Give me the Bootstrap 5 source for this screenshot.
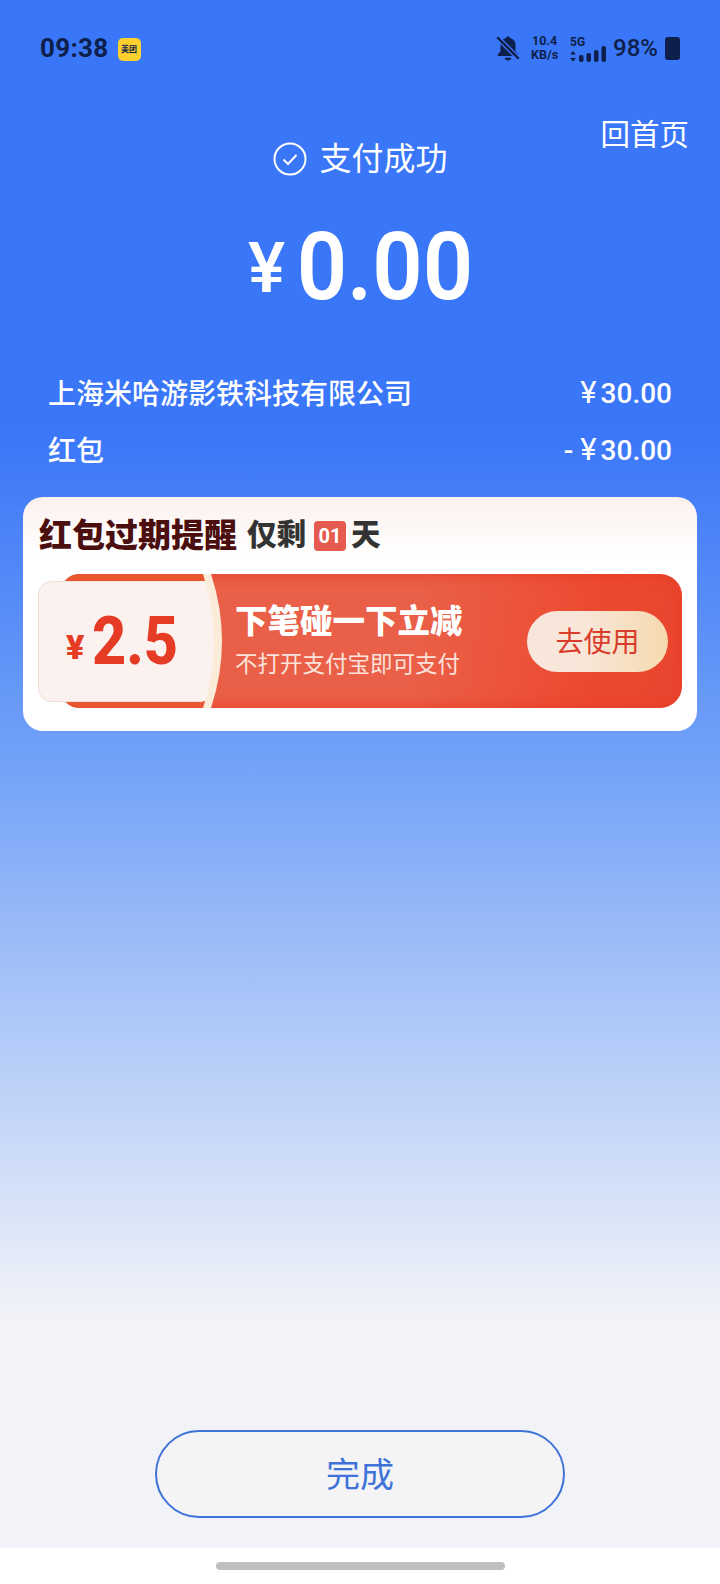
<!DOCTYPE html>
<html lang="zh-CN">
<head>
  <meta charset="UTF-8">
  <title>支付成功</title>
  <link href="https://cdn.jsdelivr.net/npm/bootstrap@5.3.0/dist/css/bootstrap.min.css" rel="stylesheet">
  <style>
    body {
      width: 720px;
      height: 1584px;
      overflow: hidden;
      background: #fff;
      font-family: Roboto, "Noto Sans CJK SC", sans-serif;
      color: #fff;
    }
    .pay-screen {
      height: 1548px;
      background: linear-gradient(180deg, #3a76f8 0, #3a76f8 430px, #6f9ff8 745px, #f1f3f8 1315px, #f1f3f8 100%);
    }
    .status-row {
      height: 96px;
      padding: 0 40px;
      color: #0d1f4a;
    }
    .clock { font-size: 26px; font-weight: 700; letter-spacing: .3px; line-height: 1; }
    .app-chip {
      width: 23px; height: 23px; margin-left: 9px; margin-top: 2px;
      background: #fdd02f; border-radius: 5px;
      font-size: 8px; font-weight: 700; line-height: 23px; text-align: center;
    }
    .speed { font-size: 12.5px; font-weight: 700; line-height: 14px; text-align: center; margin: 0 12px 0 9px; }
    .net-5g { font-size: 12px; font-weight: 700; line-height: 1; margin-top: 1px; margin-bottom: -2px; }
    .battery-pct { font-size: 24px; font-weight: 500; line-height: 1; margin: 0 7px 0 5px; }
    .battery-box { width: 15px; height: 23px; background: #0d1f4a; border-radius: 3px; }
    .home-link { font-size: 29.5px; line-height: 30px; margin: 24px 31px 0 0; }
    .result-line { font-size: 32px; line-height: 46px; gap: 12px; margin-top: -14px; margin-left: 1px; }
    .amount-line { height: 96px; margin-top: 36px; padding-left: 8px; line-height: 1; }
    .amount-yen { font-size: 70px; font-weight: 500; margin-right: 5px; margin-top: 4px; }
    .amount-num { font-size: 95px; font-weight: 600; display: inline-block; transform: scale(.93, 1); }
    .bill-rows { padding: 0 48px; margin-top: 52px; font-size: 28px; font-weight: 500; }
    .bill-row { height: 57px; }
    .bill-row .money { font-family: Roboto, sans-serif; font-size: 28px; font-weight: 500; line-height: 1; margin-top: -4px; }
    .bill-row .money b { font-size: 31px; line-height: 1; font-weight: 400; margin-right: 4px; }
    .promo-box {
      width: 674px; height: 234px; margin: 17px 0 0 23px;
      background: linear-gradient(180deg, #fbf1ee 0, #fff 60px);
      border-radius: 20px; padding: 0 15px;
    }
    .promo-head { height: 77px; padding-left: 1px; color: #333; font-weight: 900; font-size: 29.5px; }
    .promo-title {
      font-size: 33px; color: #4c0f0f; font-weight: 900; margin-right: 10px;
      text-shadow: 0 0 2px #fff;
    }
    .day-chip {
      width: 32px; height: 30px; margin: 0 5px 0 8px;
      background: #e65a50; border-radius: 4px; color: #fff;
      font: 700 20px/30px Roboto, sans-serif; text-align: center;
    }
    .ticket { height: 134px; width: 644px; }
    .stub-col { width: 172px; height: 134px; position: relative; flex: none; }
    .stub-col::before {
      content: ""; position: absolute; left: 23px; right: 0; top: 0; bottom: 0;
      background: #e8552e; border-radius: 18px 0 0 18px;
    }
    .stub-card {
      position: absolute; left: 0; top: 7px; width: 165px; height: 121px; z-index: 1;
      background: #fbf1ef; border: 1px solid #f3dfd9; border-right: 0;
      border-radius: 14px 0 0 14px;
      color: #e63b25; padding-left: 27px; line-height: 1;
    }
    .stub-yen { font-size: 34px; font-weight: 900; margin-right: 8px; margin-top: 10px; }
    .stub-num { font-size: 66px; font-weight: 800; display: inline-block; transform: scale(.9, 1); transform-origin: left center; }
    .stub-arc { position: absolute; left: 162px; top: 0; z-index: 2; }
    .ticket-body {
      flex: 1; margin-left: -8px; padding: 0 14px 0 33px;
      background: linear-gradient(100deg, #ea5f47 0, #ea5f47 45%, #ec4a30 80%, #e9452f 100%);
      border-radius: 0 22px 22px 0;
      box-shadow: inset 0 -5px 8px rgba(232, 62, 40, .45), inset 0 5px 8px rgba(232, 62, 40, .45);
    }
    .ticket-main { font-size: 32.5px; font-weight: 900; line-height: 40px; margin-top: -1px; white-space: nowrap; }
    .ticket-sub { font-size: 22.5px; line-height: 32px; color: #fbe3dc; margin-top: 6px; white-space: nowrap; }
    .use-btn {
      width: 141px; height: 61px; border: 0; padding: 4px 0 0; border-radius: 31px; flex: none;
      background: linear-gradient(90deg, #f8e6dc 0, #f8e6d9 40%, #f5d9ae 100%);
      color: #d93c2a; font-size: 28px;
    }
    .action-area { margin-top: 699px; }
    .done-btn {
      width: 410px; height: 88px; border: 2px solid #3f73d8; border-radius: 44px;
      background: #f4f4f7; color: #3f73d8; font-size: 34px; padding: 2px 0 0;
    }
    .bottom-bar { height: 36px; }
    .home-handle { width: 289px; height: 8px; background: #bfbfbf; border-radius: 4px; margin-top: 14px; }
  </style>
</head>
<body>
  <div class="pay-screen">
    <div class="status-row d-flex align-items-center">
      <span class="clock">09:38</span>
      <span class="app-chip">美团</span>
      <div class="ms-auto d-flex align-items-center">
        <svg width="28" height="28" viewBox="0 0 26 26"><path d="M13 2c-1 0-1.700.8-1.800 1.800C8 4.600 6 7 6 10.500V16l-2.500 3v1.500h19V19L20 16v-5.500C20 7 18 4.600 14.800 3.800 14.700 2.800 14 2 13 2zM10 22h6a3 2.500 0 0 1-6 0z" fill="#0d1f4a"/><path d="M3 3l20 20" stroke="#3a76f8" stroke-width="4.500"/><path d="M3 3l20 20" stroke="#0d1f4a" stroke-width="2.200"/></svg>
        <div class="speed">10.4<br>KB/s</div>
        <div class="d-flex flex-column">
          <span class="net-5g">5G</span>
          <svg width="38" height="16" viewBox="0 0 38 16" fill="#0d1f4a"><path d="M3 5l3 3.500H0zM3 15.500l3-3.500H0z"/><rect x="9" y="9" width="4.500" height="7" rx="2"/><rect x="16.500" y="7" width="4.500" height="9" rx="2"/><rect x="24" y="4" width="4.500" height="12" rx="2"/><rect x="31.500" y="0" width="4.500" height="16" rx="2"/></svg>
        </div>
        <span class="battery-pct">98%</span>
        <span class="battery-box"></span>
      </div>
    </div>
    <div class="d-flex justify-content-end"><span class="home-link">回首页</span></div>
    <div class="result-line d-flex justify-content-center align-items-center">
      <svg width="34" height="34" viewBox="0 0 34 34" fill="none" stroke="#fff"><circle cx="17" cy="17" r="15.500" stroke-width="2"/><path d="M10.500 17.500l4.500 4.500 8.500-9" stroke-width="2"/></svg>
      <span>支付成功</span>
    </div>
    <div class="amount-line d-flex justify-content-center align-items-center">
      <span class="amount-yen">¥</span><span class="amount-num">0.00</span>
    </div>
    <div class="bill-rows">
      <div class="bill-row d-flex justify-content-between align-items-center">
        <span>上海米哈游影铁科技有限公司</span><span class="money"><b>¥</b>30.00</span>
      </div>
      <div class="bill-row d-flex justify-content-between align-items-center">
        <span>红包</span><span class="money">- <b>¥</b>30.00</span>
      </div>
    </div>
    <div class="promo-box">
      <div class="promo-head d-flex align-items-center">
        <span class="promo-title">红包过期提醒</span><span>仅剩</span><span class="day-chip">01</span><span>天</span>
      </div>
      <div class="ticket d-flex">
        <div class="stub-col">
          <div class="stub-card d-flex align-items-center">
            <span class="stub-yen">¥</span><span class="stub-num">2.5</span>
          </div>
          <svg class="stub-arc" width="30" height="134" viewBox="0 0 30 134"><path d="M0 7H6Q27 67 6 127H0z" fill="#fbf1ef"/><path d="M3 0h8Q33 67 11 134H3Q25 67 3 0z" fill="#faecd9"/></svg>
        </div>
        <div class="ticket-body flex-grow-1 d-flex align-items-center justify-content-between">
          <div>
            <div class="ticket-main">下笔碰一下立减</div>
            <div class="ticket-sub">不打开支付宝即可支付</div>
          </div>
          <button class="use-btn" type="button">去使用</button>
        </div>
      </div>
    </div>
    <div class="action-area d-flex justify-content-center">
      <button class="done-btn" type="button">完成</button>
    </div>
  </div>
  <div class="bottom-bar d-flex justify-content-center"><div class="home-handle"></div></div>
  <script src="https://cdn.jsdelivr.net/npm/bootstrap@5.3.0/dist/js/bootstrap.bundle.min.js"></script>
</body>
</html>
